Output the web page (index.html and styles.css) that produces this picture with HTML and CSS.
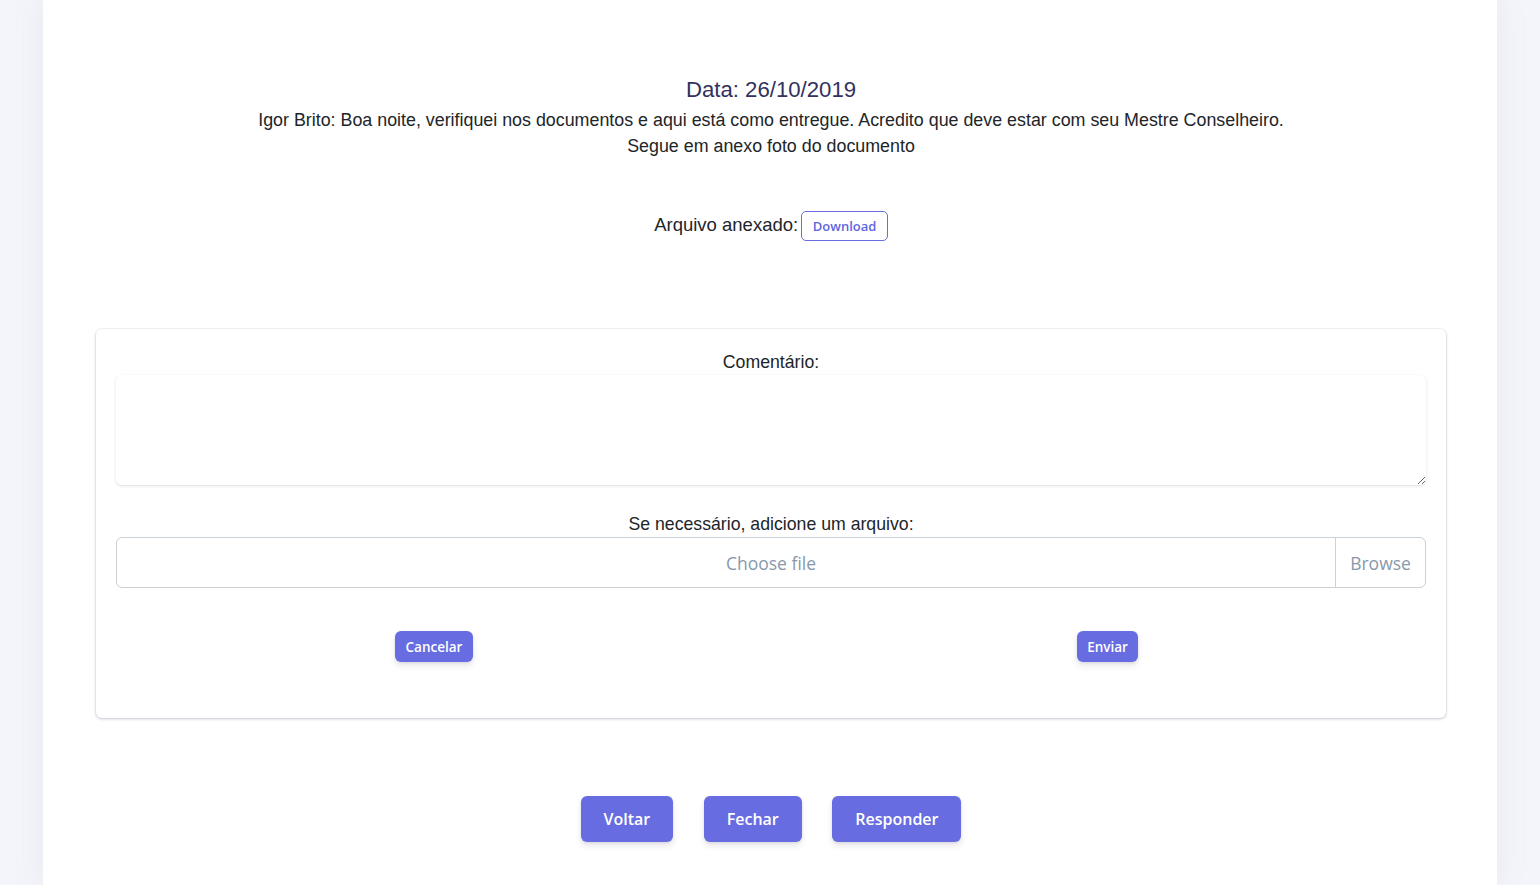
FILE: index.html
```html
<!DOCTYPE html>
<html lang="pt">
<head>
<meta charset="utf-8">
<title>Mensagem</title>
<link rel="stylesheet" href="styles.css">
</head>
<body>
<div class="page">
  <main class="container">
    <section class="outer-card">
      <div class="message">
        <h2 class="date">Data: 26/10/2019</h2>
        <p class="text">Igor Brito: Boa noite, verifiquei nos documentos e aqui está como entregue. Acredito que deve estar com seu Mestre Conselheiro.<br>Segue em anexo foto do documento</p>
        <p class="attach">Arquivo anexado: <button class="btn-outline">Download</button></p>
      </div>

      <div class="reply-card">
        <label class="label">Comentário:</label>
        <textarea class="textarea"></textarea>

        <label class="label label-file">Se necessário, adicione um arquivo:</label>
        <div class="file-input">
          <span class="file-text">Choose file</span>
          <span class="file-browse">Browse</span>
        </div>

        <div class="reply-actions">
          <div class="col"><button class="btn btn-sm">Cancelar</button></div>
          <div class="col"><button class="btn btn-sm">Enviar</button></div>
        </div>
      </div>

      <div class="actions">
        <button class="btn btn-lg">Voltar</button>
        <button class="btn btn-lg">Fechar</button>
        <button class="btn btn-lg">Responder</button>
      </div>
    </section>
  </main>
</div>
</body>
</html>
```

FILE: styles.css
```css
* { box-sizing: border-box; }
html, body { margin: 0; padding: 0; }
body {
  background: #f4f5fa;
  font-family: "Liberation Sans", Arial, sans-serif;
  color: #212529;
  height: 885px;
  overflow: hidden;
}
.page {
  display: flex;
  justify-content: center;
}
.container {
  width: 1454px;
  background: #fff;
  height: 885px;
  overflow: hidden;
  padding: 52px 51px 0 53px;
  box-shadow: 0 0 30px rgba(136, 152, 170, 0.12);
}
.outer-card {
  border-radius: 6px;
  box-shadow: 0 0 1px rgba(0, 0, 0, 0.06);
  padding-top: 25px;
  min-height: 900px;
}
.message { text-align: center; }
.date {
  margin: 0;
  font-weight: 400;
  font-size: 22.2px;
  line-height: 26px;
  color: #32325d;
}
.text {
  margin: 4px 0 0;
  font-size: 17.85px;
  line-height: 26px;
  color: #212529;
}
.attach {
  margin: 51px 0 0;
  font-size: 18.5px;
  line-height: 30px;
  color: #212529;
}
.btn-outline {
  font-family: "Open Sans", sans-serif;
  font-weight: 600;
  font-size: 13px;
  color: #5e66e0;
  background: #fff;
  border: 1px solid #676ce1;
  border-radius: 5px;
  height: 30px;
  padding: 0 10.5px;
  margin-left: -2px;
  vertical-align: middle;
}
.reply-card {
  margin-top: 88px;
  border-radius: 6px;
  box-shadow: 0 1px 3px rgba(50, 50, 93, 0.25), 0 0 0 1px rgba(0, 0, 0, 0.03);
  padding: 20px 20px 56px;
  display: flex;
  flex-direction: column;
}
.label {
  text-align: center;
  font-size: 17.7px;
  line-height: 26px;
  color: #212529;
  margin-bottom: 0;
}
.textarea {
  display: block;
  width: 100%;
  height: 110px;
  border: 0;
  border-radius: 6px;
  box-shadow: 0 1px 3px rgba(50, 50, 93, 0.15), 0 1px 0 rgba(0, 0, 0, 0.02);
  resize: vertical;
  font-family: "Open Sans", sans-serif;
}
.label-file { margin-top: 26px; }
.file-input {
  position: relative;
  display: flex;
  height: 51px;
  border: 1px solid #cad1d7;
  border-radius: 6px;
  font-family: "Open Sans", sans-serif;
  font-size: 17.5px;
  color: #8898aa;
}
.file-text {
  flex: 1;
  display: flex;
  align-items: center;
  justify-content: center;
}
.file-browse {
  position: absolute;
  top: 0;
  right: 0;
  bottom: 0;
  width: 90px;
  border-left: 1px solid #cad1d7;
  display: flex;
  align-items: center;
  justify-content: center;
}
.reply-actions {
  display: grid;
  grid-template-columns: 1fr 1fr;
  margin: 43px -15px 0;
}
.col { display: flex; justify-content: center; }
.col:first-child { padding-right: 4px; }
.col:last-child { padding-left: 3px; }
.btn {
  font-family: "Open Sans", sans-serif;
  font-weight: 600;
  color: #fff;
  background: #676ce1;
  border: 0;
  border-radius: 6px;
  box-shadow: 0 4px 6px rgba(50, 50, 93, 0.11), 0 1px 3px rgba(0, 0, 0, 0.08);
}
.btn-sm {
  font-size: 13.5px;
  height: 31px;
  padding: 0 10.5px;
}
.actions {
  display: flex;
  justify-content: center;
  gap: 30.5px;
  margin-top: 78px;
}
.btn-lg {
  font-size: 16px;
  height: 46px;
  padding: 0 23px;
  letter-spacing: 0;
}
```
